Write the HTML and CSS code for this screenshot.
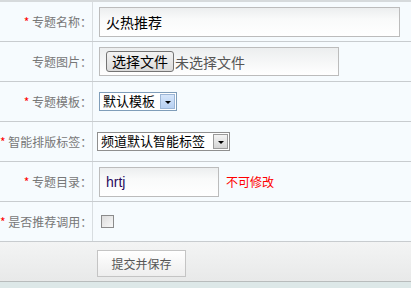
FILE: index.html
```html
<!DOCTYPE html>
<html>
	<head>
		<meta charset="UTF-8">
		<title>专题编辑</title>
		<link rel="stylesheet" href="styles.css">
	</head>
	<body>
		<div class="form-tab">
			<div class="row">
				<div class="lab"><em>*</em> 专题名称：</div>
				<div class="val"><div class="ipt ipt-long">火热推荐</div></div>
			</div>
			<div class="row">
				<div class="lab">专题图片：</div>
				<div class="val">
					<div class="file-box">
						<span class="file-btn">选择文件</span><span class="file-tip">未选择文件</span>
					</div>
				</div>
			</div>
			<div class="row">
				<div class="lab"><em>*</em> 专题模板：</div>
				<div class="val">
					<div class="sel sel-tpl"><span>默认模板</span><i class="arr arr-blue"></i></div>
				</div>
			</div>
			<div class="row">
				<div class="lab"><em>*</em> 智能排版标签：</div>
				<div class="val">
					<div class="sel sel-tag"><span>频道默认智能标签</span><i class="arr arr-grey"></i></div>
				</div>
			</div>
			<div class="row">
				<div class="lab"><em>*</em> 专题目录：</div>
				<div class="val">
					<div class="ipt ipt-short">hrtj</div>
					<span class="warn">不可修改</span>
				</div>
			</div>
			<div class="row">
				<div class="lab"><em>*</em> 是否推荐调用：</div>
				<div class="val"><span class="chk"></span></div>
			</div>
			<div class="foot">
				<div class="btn-save">提交并保存</div>
			</div>
		</div>
	</body>
</html>
```

FILE: styles.css
```css
body { margin: 0; background: #dde8e8; font-family: "Noto Sans CJK SC", "Microsoft YaHei", sans-serif; }

.form-tab { border-top: 2px solid #d6dadc; background: #f6fbfe; }
.row { display: flex; height: 39px; border-bottom: 1px solid #c8cccf; }
.lab { width: 92px; flex: none; border-right: 1px solid #d8dde0; text-align: right; font-size: 12px; color: #777; line-height: 39px; white-space: nowrap; }
.lab em { color: #f00; font-style: normal; }
.val { flex: 1; display: flex; align-items: center; padding-left: 6px; }

.ipt { box-sizing: border-box; height: 30px; border: 1px solid #bcbcbc; background: linear-gradient(#eceeef, #f9fafa 40%, #fff); font-size: 14px; line-height: 28px; padding-left: 6px; color: #000; }
.ipt-long { width: 301px; }
.ipt-short { width: 120px; color: #2a0a5e; font-family: "Liberation Sans", Arial, sans-serif; font-size: 14px; }
.warn { margin-left: 7px; font-size: 12px; color: #f00; }

.file-box { box-sizing: border-box; width: 240px; height: 29px; border: 1px solid #bcbcbc; background: linear-gradient(#eceeef, #fff); display: flex; align-items: center; padding-left: 6px; font-size: 14px; white-space: nowrap; }
.file-btn { box-sizing: border-box; height: 21px; line-height: 19px; padding: 0 5px; border: 1px solid #747474; border-radius: 3px; background: linear-gradient(#f3f3f3, #dadada); color: #000; }
.file-tip { color: #555; margin-left: 1px; }

.sel { box-sizing: border-box; height: 19px; display: flex; align-items: center; border: 1px solid #7f9db9; background: #fff; font-size: 13px; line-height: 15px; color: #000; white-space: nowrap; overflow: hidden; }
.sel span { padding: 0 3px 2px; }
.sel-tpl { width: 78px; }
.sel-tag { width: 133px; margin-left: -2px; border-color: #8f8f8f; }
.arr { margin-left: auto; width: 15px; height: 15px; margin-right: 1px; flex: none; box-sizing: border-box; position: relative; }
.arr:after { content: ""; position: absolute; left: 4px; top: 6px; border-left: 3px solid transparent; border-right: 3px solid transparent; border-top: 3px solid #000; }
.arr-blue { border: 1px solid #9cb6d6; background: linear-gradient(#d6e6fb, #b7d0f1); }
.arr-grey { border: 1px solid #9a9a9a; background: linear-gradient(#f4f4f4, #d4d4d4); }

.chk { box-sizing: border-box; width: 13px; height: 13px; margin-left: 2px; border: 1px solid #8b8b8b; background: linear-gradient(135deg, #dcdcdc, #f8f8f8); }

.foot { height: 39px; border-bottom: 1px solid #b8bcbc; background: linear-gradient(#f3f4f4, #e8e9e9); display: flex; align-items: center; padding-left: 97px; }
.btn-save { box-sizing: border-box; width: 89px; height: 27px; margin-top: 4px; border: 1px solid #c4c4c4; background: linear-gradient(#fff, #eeeeee); font-size: 12px; color: #555; text-align: center; line-height: 25px; }
```
